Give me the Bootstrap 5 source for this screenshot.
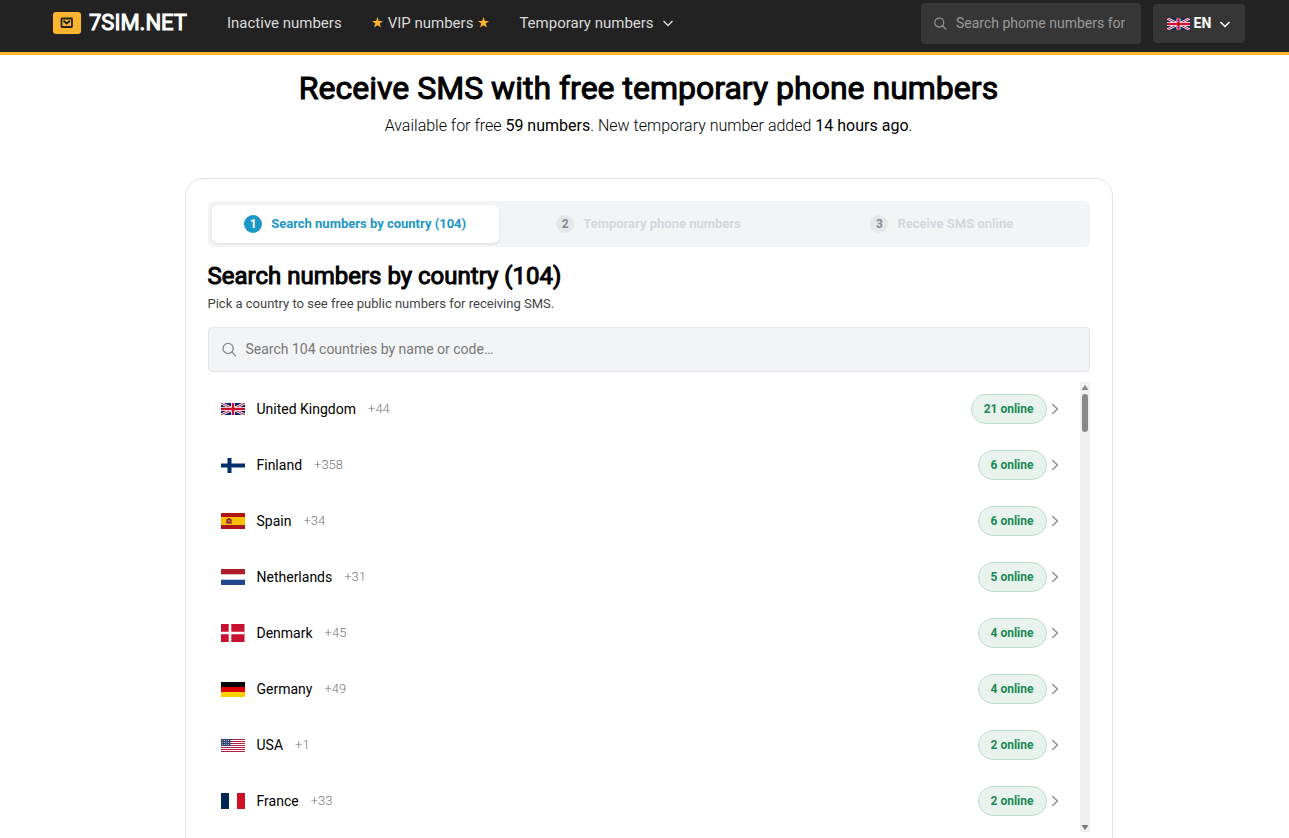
<!DOCTYPE html>
<html lang="en">
<head>
<meta charset="utf-8">
<meta name="viewport" content="width=device-width, initial-scale=1">
<title>7SIM.NET</title>
<link href="https://cdn.jsdelivr.net/npm/bootstrap@5.3.0/dist/css/bootstrap.min.css" rel="stylesheet">
<style>
body{font-family:Roboto,"Liberation Sans",sans-serif;color:#000;background:#fff}
a{text-decoration:none;color:inherit}
svg{flex:none;display:block}
.site-bar{background:#222;border-bottom:3px solid #ffb52e;padding:3px 44px 8px 53px}
.logo-box{width:28px;height:22px;background:#ffb52e;border-radius:3px}
.bar-left{padding-bottom:2px}
.brand-name{font-size:22px;line-height:26px;font-weight:400;-webkit-text-stroke:1px;color:#fff}
.menu-link{font-size:15px;line-height:20px;color:#d9d9d9;gap:30px;margin-left:40px}
.vip{gap:5px}
.star{fill:#ffb52e}
.box-search{background:#363636;border-radius:4px;width:220px;height:41px;padding:0 16px 0 12px;color:#999}
.box-search input,.country-search input{background:none;border:0;outline:0;padding:0;min-width:0;flex:1}
.box-search input{font-size:14px;color:#fff}
.box-search input::placeholder{color:#999;opacity:1}
.bar-right{gap:12px}
.lang-btn{background:#363636;border:0;border-radius:4px;width:92px;height:39px;color:#fff;font-size:14px;font-weight:700;padding:0}
.page-main{padding:12px 0 32px 8px}
h1{font-size:32px;line-height:42px;font-weight:400;-webkit-text-stroke:1px;margin:0}
.intro{font-size:16px;line-height:24px;font-weight:300;margin:5px 0 40px}
.intro b{font-weight:400}
.panel{max-width:928px;border:1px solid #e3e4e9;border-radius:18px;padding:22px}
.steps{background:#f3f4f6;border-radius:6px;padding:4px;gap:6px}
.step{height:38px;border:0;border-radius:6px;background:none;font-size:13px;font-weight:700;color:#d5d8de;padding:0;gap:9px}
.step.on{background:#fff;color:#1d97c7;box-shadow:0 1px 3px rgba(0,0,0,.1)}
.num{width:18px;height:18px;border-radius:50%;background:#e4e7eb;color:#888;font-size:12px;line-height:18px}
.on .num{background:#1d97c7;color:#fff}
h2{font-size:24px;line-height:28px;font-weight:400;-webkit-text-stroke:1px;margin:15px 0 4px}
.hint{font-size:13px;line-height:20px;color:#444;margin:0 0 13px}
.country-search{background:#f3f4f6;border:1px solid #e3e6ea;border-radius:4px;height:45px;padding:0 12px;color:#888}
.country-search input{font-size:14px}
.country-search input::placeholder{color:#777;opacity:1}
.country-area{margin-top:10px;height:450px}
.countries{gap:2px;overflow:hidden}
.country{height:54px;font-size:14px;padding:0 17px 0 13px;gap:12px}
.dial{font-size:13px;font-weight:300;color:#777}
.online{border:1px solid #b9dccb;background:#e8f3ed;color:#198754;border-radius:15px;font-size:12px;line-height:28px;font-weight:700;padding:0 12px}
.chev{color:#888}
.rail{width:10px;background:#f0f0f0}
.thumb{width:6px;height:38px;border-radius:3px;background:#888}
</style>
</head>
<body>
<svg width="0" height="0" class="position-absolute" aria-hidden="true">
<symbol id="lens" viewBox="0 0 16 16"><path d="M11.500 7A4.800 4.800 0 1 1 1.900 7a4.800 4.800 0 0 1 9.600 0M10.200 10.400 14 14.200" fill="none" stroke="currentColor" stroke-width="1.200"/></symbol>
<symbol id="down" viewBox="0 0 12 12"><path d="m1.500 4 4.500 4.500L10.500 4" fill="none" stroke="currentColor" stroke-width="1.500"/></symbol>
<symbol id="right" viewBox="0 0 16 16"><path d="m5.300 3.300 5.200 4.700-5.200 4.700" fill="none" stroke="currentColor" stroke-width="1.300"/></symbol>
<symbol id="star" viewBox="0 0 10 10"><path d="m5 0 1.200 3.600H10L7 5.900l1.100 3.700L5 7.400 1.900 9.600 3 5.900 0 3.600h3.800z"/></symbol>
<symbol id="uk" viewBox="0 0 24 12"><path fill="#012169" d="M0 0h24v12H0z"/><path d="m0 0 24 12M24 0 0 12" stroke="#fff" stroke-width="2.600"/><path d="m0 0 24 12M24 0 0 12" stroke="#c8102e" stroke-width="1"/><path d="M12 0v12M0 6h24" stroke="#fff" stroke-width="4"/><path d="M12 0v12M0 6h24" stroke="#c8102e" stroke-width="2.400"/></symbol>
</svg>
<header class="site-bar d-flex align-items-center">
  <div class="bar-left d-flex align-items-center">
  <a href="#" class="d-flex align-items-center gap-2">
    <span class="logo-box d-flex align-items-center justify-content-center"><svg width="14" height="12" viewBox="0 0 14 12" fill="none" stroke="#222" stroke-width="1.800"><rect x="1.500" y="1.500" width="10.500" height="8.500" rx=".5"/><path d="m3.500 3.700 3.300 2.800L10 3.700"/></svg></span>
    <span class="brand-name">7SIM.NET</span>
  </a>
  <nav class="d-flex menu-link">
    <a href="#">Inactive numbers</a>
    <a href="#" class="vip d-flex align-items-center"><svg class="star" width="11" height="11"><use href="#star"/></svg>VIP numbers <svg class="star" width="11" height="11"><use href="#star"/></svg></a>
    <a href="#" class="d-flex align-items-center gap-2">Temporary numbers <svg width="12" height="12"><use href="#down"/></svg></a>
  </nav>
  </div>
  <div class="bar-right d-flex align-items-center ms-auto">
    <div class="box-search d-flex align-items-center gap-2"><svg width="15" height="15"><use href="#lens"/></svg><input type="text" aria-label="Search phone numbers" placeholder="Search phome numbers for SMS"></div>
    <button class="lang-btn d-flex align-items-center justify-content-center" type="button"><svg width="23" height="12"><use href="#uk"/></svg><span class="ms-1 me-2">EN</span><svg width="12" height="12"><use href="#down"/></svg></button>
  </div>
</header>
<main class="page-main">
  <div class="text-center">
    <h1>Receive SMS with free temporary phone numbers</h1>
    <p class="intro">Available for free <b>59 numbers</b>. New temporary number added <b>14 hours ago</b>.</p>
  </div>
  <section class="panel mx-auto">
    <div class="steps d-flex">
      <button type="button" class="step on flex-fill w-100 d-flex align-items-center justify-content-center"><span class="num">1</span>Search numbers by country (104)</button>
      <button type="button" class="step flex-fill w-100 d-flex align-items-center justify-content-center"><span class="num">2</span>Temporary phone numbers</button>
      <button type="button" class="step flex-fill w-100 d-flex align-items-center justify-content-center"><span class="num">3</span>Receive SMS online</button>
    </div>
    <h2>Search numbers by country (104)</h2>
    <p class="hint">Pick a country to see free public numbers for receiving SMS.</p>
    <div class="country-search d-flex align-items-center gap-2"><svg width="17" height="17"><use href="#lens"/></svg><input type="text" aria-label="Search countries" placeholder="Search 104 countries by name or code…"></div>
    <div class="country-area d-flex">
      <div class="countries flex-fill d-flex flex-column">
        <a href="#" class="country flex-shrink-0 d-flex align-items-center"><svg width="24" height="12"><use href="#uk"/></svg>United Kingdom<span class="dial">+44</span><span class="ms-auto d-flex align-items-center"><span class="online">21 online</span><svg class="chev" width="16" height="16"><use href="#right"/></svg></span></a>
        <a href="#" class="country flex-shrink-0 d-flex align-items-center"><svg width="24" height="15" viewBox="0 0 24 15"><path fill="#fff" d="M0 0h24v15H0z"/><path d="M8.500 0v15M0 7.500h24" stroke="#002f6c" stroke-width="4"/></svg>Finland<span class="dial">+358</span><span class="ms-auto d-flex align-items-center"><span class="online">6 online</span><svg class="chev" width="16" height="16"><use href="#right"/></svg></span></a>
        <a href="#" class="country flex-shrink-0 d-flex align-items-center"><svg width="24" height="16" viewBox="0 0 24 16"><path fill="#ad1519" d="M0 0h24v16H0z"/><path fill="#fabd00" d="M0 4h24v8H0z"/><path fill="#ad1519" d="M6 6h4v4.500H6zM7 5h2v1H7z"/><path d="M5.500 6v5M10.500 6v5M6 10.500h4" stroke="#9b713b"/><path fill="#d7b0a0" d="M7.300 7.300h1.500v1.500H7.300z"/></svg>Spain<span class="dial">+34</span><span class="ms-auto d-flex align-items-center"><span class="online">6 online</span><svg class="chev" width="16" height="16"><use href="#right"/></svg></span></a>
        <a href="#" class="country flex-shrink-0 d-flex align-items-center"><svg width="24" height="16" viewBox="0 0 24 16"><path fill="#fff" d="M0 0h24v16H0z"/><path fill="#ae1c28" d="M0 0h24v5.300H0z"/><path fill="#21468b" d="M0 10.700h24V16H0z"/></svg>Netherlands<span class="dial">+31</span><span class="ms-auto d-flex align-items-center"><span class="online">5 online</span><svg class="chev" width="16" height="16"><use href="#right"/></svg></span></a>
        <a href="#" class="country flex-shrink-0 d-flex align-items-center"><svg width="24" height="18" viewBox="0 0 24 18"><path fill="#c8102e" d="M0 0h23.500v18H0z"/><path d="M9 0v18M0 9h23.500" stroke="#fff" stroke-width="2.600"/></svg>Denmark<span class="dial">+45</span><span class="ms-auto d-flex align-items-center"><span class="online">4 online</span><svg class="chev" width="16" height="16"><use href="#right"/></svg></span></a>
        <a href="#" class="country flex-shrink-0 d-flex align-items-center"><svg width="24" height="15" viewBox="0 0 24 15"><path d="M0 0h24v5H0z"/><path fill="#d00" d="M0 5h24v5H0z"/><path fill="#ffce00" d="M0 10h24v5H0z"/></svg>Germany<span class="dial">+49</span><span class="ms-auto d-flex align-items-center"><span class="online">4 online</span><svg class="chev" width="16" height="16"><use href="#right"/></svg></span></a>
        <a href="#" class="country flex-shrink-0 d-flex align-items-center"><svg width="24" height="13" viewBox="0 0 24 13"><path fill="#fff" d="M0 0h24v13H0z"/><path d="M0 .5h24M0 2.500h24M0 4.500h24M0 6.500h24M0 8.500h24M0 10.500h24M0 12.500h24" stroke="#b22244"/><path fill="#2f4878" d="M0 0h10v7H0z"/><path d="M1 1.500h9M1 3.500h9M1 5.500h9" stroke="#a5b0c8" stroke-dasharray="1 1"/></svg>USA<span class="dial">+1</span><span class="ms-auto d-flex align-items-center"><span class="online">2 online</span><svg class="chev" width="16" height="16"><use href="#right"/></svg></span></a>
        <a href="#" class="country flex-shrink-0 d-flex align-items-center"><svg width="24" height="16" viewBox="0 0 24 16"><path fill="#fff" d="M0 0h24v16H0z"/><path fill="#002654" d="M0 0h8v16H0z"/><path fill="#ce1126" d="M16 0h8v16h-8z"/></svg>France<span class="dial">+33</span><span class="ms-auto d-flex align-items-center"><span class="online">2 online</span><svg class="chev" width="16" height="16"><use href="#right"/></svg></span></a>
      </div>
      <div class="rail d-flex flex-column align-items-center" aria-hidden="true"><svg width="10" height="12" viewBox="0 0 10 12"><path fill="#888" d="m5 3 3.500 5h-7z"/></svg><span class="thumb"></span><svg class="mt-auto" width="10" height="12" viewBox="0 0 10 12"><path fill="#777" d="M1.500 5h7L5 10z"/></svg></div>
    </div>
  </section>
</main>
<script src="https://cdn.jsdelivr.net/npm/bootstrap@5.3.0/dist/js/bootstrap.bundle.min.js"></script>
</body>
</html>
